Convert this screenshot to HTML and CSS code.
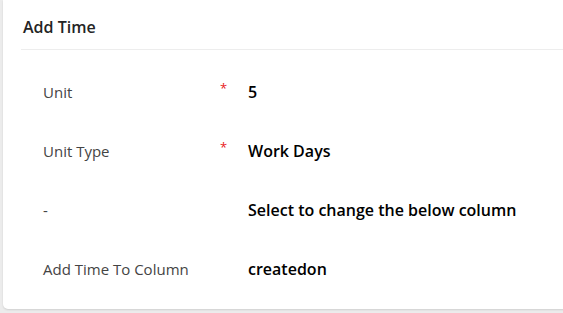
FILE: index.html
```html
<!DOCTYPE html>
<html>
<head>
<meta charset="utf-8">
<link rel="stylesheet" href="styles.css">
</head>
<body>
<div class="card">
  <div class="header"><span class="title">Add Time</span></div>
  <div class="rows">
    <div class="row">
      <div class="label">Unit</div>
      <div class="req">*</div>
      <div class="value">5</div>
    </div>
    <div class="row">
      <div class="label">Unit Type</div>
      <div class="req">*</div>
      <div class="value">Work Days</div>
    </div>
    <div class="row">
      <div class="label">-</div>
      <div class="req"></div>
      <div class="value">Select to change the below column</div>
    </div>
    <div class="row">
      <div class="label">Add Time To Column</div>
      <div class="req"></div>
      <div class="value">createdon</div>
    </div>
  </div>
</div>
</body>
</html>
```
FILE: styles.css
```css
html, body {
  margin: 0;
  padding: 0;
}
body {
  background: #ececec;
  width: 563px;
  height: 313px;
  overflow: hidden;
  font-family: "Open Sans", "Noto Sans", sans-serif;
}
.card {
  margin-left: 3px;
  width: 580px;
  height: 309px;
  background: #ffffff;
  border-bottom-left-radius: 5px;
  box-shadow: 0 1px 2px rgba(0,0,0,0.12);
}
.header {
  margin-left: 18px;
  height: 50px;
  border-bottom: 1px solid #ededed;
  display: flex;
  align-items: center;
  box-sizing: border-box;
  padding-left: 2px;
  padding-top: 4px;
}
.title {
  font-size: 16px;
  font-weight: 600;
  color: #242424;
}
.rows {
  padding-top: 12px;
}
.row {
  display: grid;
  grid-template-columns: 177px 28px 1fr;
  height: 59px;
  align-items: center;
  padding-left: 40px;
}
.label {
  font-size: 15px;
  color: #444444;
}
.req {
  color: #e81b1b;
  font-size: 13px;
  align-self: center;
  margin-top: -8px;
  padding-left: 0;
}
.value {
  font-size: 16px;
  font-weight: 600;
  color: #000000;
}
```
